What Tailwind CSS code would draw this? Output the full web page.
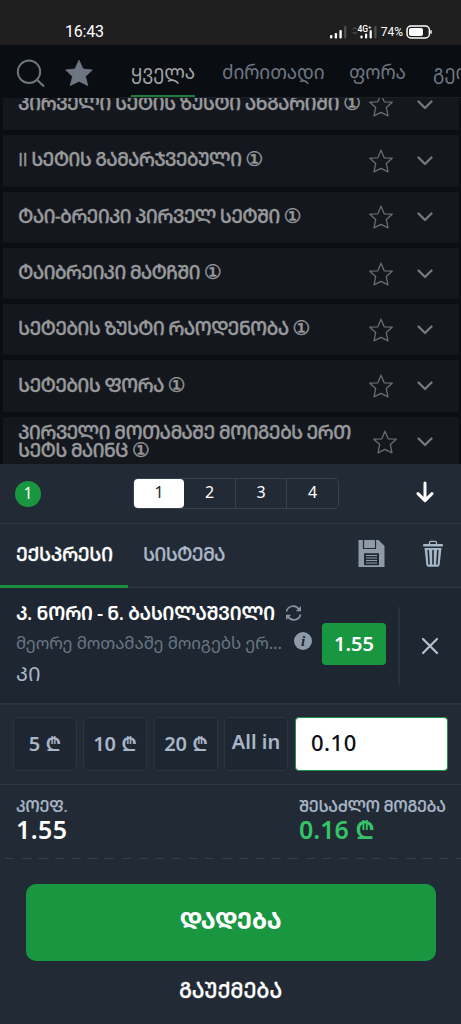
<!DOCTYPE html>
<html lang="ka">
<head>
<meta charset="utf-8">
<meta name="viewport" content="width=device-width, initial-scale=1">
<title>ფსონი</title>
<script src="https://cdn.jsdelivr.net/npm/@tailwindcss/browser@4"></script>
</head>
<body class="h-[1024px] w-[461px] overflow-hidden bg-[#222b35] font-['Noto_Sans','Noto_Sans_Georgian','DejaVu_Sans',sans-serif] text-white">
<svg class="hidden">
  <symbol id="star" viewBox="0 0 24 24"><path d="M12 1.2 L15.2 8.8 L23.2 9.2 L17.3 14.6 L19 22.8 L12 19.4 L5 22.8 L6.700 14.6 L.8 9.2 L8.8 8.8 Z" fill="none" stroke="currentColor" stroke-width="1.300" stroke-linejoin="round"/></symbol>
  <symbol id="chev" viewBox="0 0 16 10"><path d="M1.500 1.500 L8 8 L14.500 1.500" fill="none" stroke="currentColor" stroke-width="2.200" stroke-linecap="round" stroke-linejoin="round"/></symbol>
</svg>

<!-- Status bar -->
<div class="flex h-[45px] items-end justify-between bg-[#1f1f1f] pr-[29px] pb-[4px] pl-[65px] font-['Roboto',sans-serif]">
  <span class="text-[16px] leading-[19px] tracking-[-0.2px]">16:43</span>
  <div class="mb-[1px] flex items-center">
    <svg class="mr-[1px] h-[16px] w-[50px]" viewBox="1 0 50 16" fill="#fff">
      <rect x="1" y="11" width="2.4" height="3.5" rx="1"/><rect x="5.7" y="9" width="2.4" height="5.5" rx="1"/><rect x="10.4" y="6" width="2.4" height="8.5" rx="1"/><rect x="15.1" y="2" width="2.2" height="12.5" rx="1" fill="#505050"/>
      <path d="M24 5.5 l1.8 -2 l1.8 2 M24 8 l1.8 2 l1.8 -2" fill="none" stroke="#666" stroke-width="1"/>
      <text x="28.5" y="7.8" font-size="8.5" font-weight="500" font-family="Roboto">4G⁺</text>
      <rect x="31.4" y="11.5" width="2.2" height="3" rx="1"/><rect x="36" y="9.5" width="2.2" height="5" rx="1"/><rect x="40.6" y="6" width="2.2" height="8.5" rx="1"/><rect x="45.3" y="2" width="2.2" height="12.5" rx="1" fill="#505050"/>
    </svg>
    <span class="mr-[3px] text-[12px] leading-[16px]">74%</span>
    <svg class="h-[14px] w-[26px]" viewBox="0 0 26 14"><rect x="1" y="1" width="22.4" height="12" rx="4" fill="none" stroke="#fff" stroke-width="1.5"/><rect x="3" y="3" width="14" height="8" rx="2" fill="#fff"/><rect x="24.3" y="5" width="1.4" height="4" rx=".7" fill="#fff"/></svg>
  </div>
</div>

<!-- Market filter tabs -->
<div class="flex h-[53px] bg-[#0a0d12] text-[#6e7681]">
  <svg class="mt-[14px] ml-[16px] h-[28px] w-[29px] shrink-0" viewBox="0 0 29 28"><circle cx="13" cy="12.8" r="11.2" fill="none" stroke="currentColor" stroke-width="2"/><path d="M21 20.8 L27.3 26.8" stroke="currentColor" stroke-width="2.2" stroke-linecap="round"/></svg>
  <svg class="mt-[14px] ml-[20px] h-[28px] w-[28px] shrink-0" viewBox="0 0 28 28"><path d="M14 1.2 L18 10 L27.3 11 L20.4 17.4 L22.8 26.6 L14 22.2 L5.2 26.6 L7.6 17.4 L0.7 11 L10 10 Z" fill="currentColor" stroke="currentColor" stroke-width=".8" stroke-linejoin="round"/></svg>
  <div class="ml-[26px] flex flex-1 overflow-hidden border-b border-[#1b2026] pl-[12px] text-[19px] leading-[54px] tracking-[-0.1px] whitespace-nowrap">
    <span class="relative h-[52px] w-[64px] shrink-0 text-[#a0a3a6]">ყველა<i class="absolute bottom-0 left-0 h-[2px] w-[64px] bg-[#1d7b3b]"></i></span>
    <span class="ml-[27px] w-[101px] shrink-0">ძირითადი</span>
    <span class="ml-[26px] w-[57px] shrink-0">ფორა</span>
    <span class="ml-[27px] shrink-0">გეიმი</span>
  </div>
</div>

<!-- Market list -->
<div class="h-[366px] overflow-hidden bg-[#0b0e12] pr-[2px] pl-[3px] text-[19px] leading-[18px] font-medium tracking-[-0.8px] text-[#98999b] [-webkit-text-stroke:0.3px_#98999b] [font-feature-settings:'case'] font-['Open_Sans','Noto_Sans_Georgian','DejaVu_Sans',sans-serif]">
  <div class="-mt-[19px] flex flex-col gap-[5px]">
    <div class="flex h-[51.3px] items-center bg-[#14181e] pr-[26px] pl-[15px]"><span class="mt-[-3px] flex-1 tracking-[-0.68px] whitespace-nowrap">პირველი სეტის ზუსტი ანგარიში <span class="text-[20px] [-webkit-text-stroke:0.5px_#98999b] font-['DejaVu_Sans']">①</span></span><svg class="h-[24px] w-[24px] text-[#686d74]"><use href="#star"/></svg><svg class="ml-[24px] h-[10px] w-[16px] text-[#767b82]"><use href="#chev"/></svg></div>
    <div class="flex h-[51.3px] items-center bg-[#14181e] pr-[26px] pl-[15px]"><span class="mt-[-3px] flex-1 whitespace-nowrap">II სეტის გამარჯვებული <span class="text-[20px] [-webkit-text-stroke:0.5px_#98999b] font-['DejaVu_Sans']">①</span></span><svg class="h-[24px] w-[24px] text-[#686d74]"><use href="#star"/></svg><svg class="ml-[24px] h-[10px] w-[16px] text-[#767b82]"><use href="#chev"/></svg></div>
    <div class="flex h-[51.3px] items-center bg-[#14181e] pr-[26px] pl-[15px]"><span class="mt-[-3px] flex-1 whitespace-nowrap">ტაი-ბრეიკი პირველ სეტში <span class="text-[20px] [-webkit-text-stroke:0.5px_#98999b] font-['DejaVu_Sans']">①</span></span><svg class="h-[24px] w-[24px] text-[#686d74]"><use href="#star"/></svg><svg class="ml-[24px] h-[10px] w-[16px] text-[#767b82]"><use href="#chev"/></svg></div>
    <div class="flex h-[51.3px] items-center bg-[#14181e] pr-[26px] pl-[15px]"><span class="mt-[-3px] flex-1 whitespace-nowrap">ტაიბრეიკი მატჩში <span class="text-[20px] [-webkit-text-stroke:0.5px_#98999b] font-['DejaVu_Sans']">①</span></span><svg class="h-[24px] w-[24px] text-[#686d74]"><use href="#star"/></svg><svg class="ml-[24px] h-[10px] w-[16px] text-[#767b82]"><use href="#chev"/></svg></div>
    <div class="flex h-[51.3px] items-center bg-[#14181e] pr-[26px] pl-[15px]"><span class="mt-[-3px] flex-1 whitespace-nowrap">სეტების ზუსტი რაოდენობა <span class="text-[20px] [-webkit-text-stroke:0.5px_#98999b] font-['DejaVu_Sans']">①</span></span><svg class="h-[24px] w-[24px] text-[#686d74]"><use href="#star"/></svg><svg class="ml-[24px] h-[10px] w-[16px] text-[#767b82]"><use href="#chev"/></svg></div>
    <div class="flex h-[51.3px] items-center bg-[#14181e] pr-[26px] pl-[15px]"><span class="mt-[-3px] flex-1 whitespace-nowrap">სეტების ფორა <span class="text-[20px] [-webkit-text-stroke:0.5px_#98999b] font-['DejaVu_Sans']">①</span></span><svg class="h-[24px] w-[24px] text-[#686d74]"><use href="#star"/></svg><svg class="ml-[24px] h-[10px] w-[16px] text-[#767b82]"><use href="#chev"/></svg></div>
    <div class="flex h-[51.3px] items-center bg-[#14181e] pr-[26px] pl-[15px]"><span class="mt-[-3px] flex-1 whitespace-nowrap">პირველი მოთამაშე მოიგებს ერთ<br>სეტს მაინც <span class="text-[20px] leading-[16px] [-webkit-text-stroke:0.5px_#98999b] font-['DejaVu_Sans']">①</span></span><svg class="h-[24px] w-[24px] text-[#686d74]"><use href="#star"/></svg><svg class="ml-[20px] h-[10px] w-[16px] text-[#767b82]"><use href="#chev"/></svg></div>
  </div>
</div>

<!-- Bet slip header -->
<div class="flex h-[60px] items-center border-b border-[#303943] pr-[27px] pl-[15px]">
  <span class="flex h-[26px] w-[26px] items-center justify-center rounded-full bg-[#199640] pb-[2px] text-[16px] leading-none">1</span>
  <div class="ml-[92px] flex h-[31px] w-[206px] rounded-[5px] border border-[#37414b] text-[16px] leading-[27px]">
    <span class="w-[50px] rounded-[4px] bg-white text-center text-[#222b35]">1</span>
    <span class="w-[52px] border-r border-[#37414b] text-center">2</span>
    <span class="w-[51px] border-r border-[#37414b] text-center">3</span>
    <span class="w-[51px] text-center">4</span>
  </div>
  <svg class="mt-[-4px] ml-auto h-[22px] w-[18px]" viewBox="0 0 18 22"><path d="M9 2 V19 M2 12.6 L9 19.6 L16 12.6" fill="none" stroke="#fff" stroke-width="3" stroke-linecap="round" stroke-linejoin="round"/></svg>
</div>

<!-- Bet type tabs -->
<div class="flex h-[64px] items-center border-b border-[#303943] pr-[18px] text-[19px] leading-[60px] font-medium [font-feature-settings:'case'] font-['Open_Sans','Noto_Sans_Georgian',sans-serif]">
  <span class="relative h-[64px] w-[128px] pl-[16px] tracking-[-0.4px] whitespace-nowrap [-webkit-text-stroke:0.3px_#fff]">ექსპრესი<i class="absolute bottom-0 left-0 h-[3px] w-[128px] bg-[#1a8f40]"></i></span>
  <span class="h-[64px] pl-[15px] tracking-[-0.7px] text-[#a9b6c8] [-webkit-text-stroke:0.2px_#a9b6c8]">სისტემა</span>
  <svg class="mt-[-4px] ml-auto h-[27px] w-[27px]" viewBox="0 0 27 27"><path d="M.5 0 H20.5 L26.5 6 V27 H.5 Z" fill="#8e9aa8"/><path d="M5.5 0 V8.5 H17.5 V0" fill="none" stroke="#222b35" stroke-width="1.2"/><rect x="12.8" y="1.2" width="4" height="5.2" fill="#8e9aa8"/><rect x="6" y="13.2" width="15" height="12" fill="#222b35"/><path d="M8 15.5 H19 M8 18 H19 M8 20.5 H19 M8 23 H19" stroke="#8e9aa8" stroke-width="1.2"/></svg>
  <svg class="mt-[-4px] ml-[38px] h-[27px] w-[20px]" viewBox="0 0 20 27"><path d="M6.5 4.5 V2.6 Q6.5 1.3 7.8 1.3 H12.2 Q13.5 1.3 13.5 2.6 V4.5" fill="none" stroke="#a9b6c8" stroke-width="1.3"/><rect x="0" y="4" width="20" height="2.6" rx="1" fill="#a9b6c8"/><path d="M1.5 8 H18.5 L16.6 25 Q16.4 26.8 14.6 26.8 H5.4 Q3.6 26.8 3.4 25 Z" fill="#a9b6c8"/><path d="M5.2 10.5 L6.1 24 M10 10.5 V24 M14.8 10.5 L13.9 24" stroke="#222b35" stroke-width="1.6" stroke-linecap="round"/></svg>
</div>

<!-- Selection -->
<div class="flex h-[117px] border-b-2 border-[#2b343e] bg-[#1e2731] pl-[16px]">
  <div class="w-[306px] pt-[12px]">
    <div class="flex h-[26px] items-center">
      <span class="w-[269px] text-[19px] font-semibold tracking-[-0.5px] whitespace-nowrap [font-feature-settings:'case'] font-['Open_Sans','Noto_Sans_Georgian',sans-serif]">კ. ნორი - ნ. ბასილაშვილი</span>
      <svg class="h-[16px] w-[17px] text-[#8794a3]" viewBox="0 0 17 16" fill="none" stroke="currentColor" stroke-width="1.7"><path d="M1.5 6.5 A6.8 6.8 0 0 1 14 4.5 M15.5 9.5 A6.8 6.8 0 0 1 3 11.500"/><path d="M10.8 6.2 H16 V1 Z M6.2 9.8 H1 V15 Z" fill="currentColor" stroke="none"/></svg>
    </div>
    <div class="flex h-[33px] items-center">
      <span class="w-[278px] text-[17px] tracking-[-0.14px] whitespace-nowrap text-[#6b7683]">მეორე მოთამაშე მოიგებს ერ...</span>
      <svg class="-mt-[4px] h-[18px] w-[18px]" viewBox="0 0 18 18"><circle cx="9" cy="9" r="9" fill="#8e9aa8"/><text x="9" y="14" text-anchor="middle" font-size="15" font-weight="700" font-style="italic" font-family="Liberation Serif" fill="#1e2731">i</text></svg>
    </div>
    <div class="text-[20px] leading-[30px] text-[#a9b6c8] [font-feature-settings:'case'] font-['Open_Sans','Noto_Sans_Georgian',sans-serif]">კი</div>
  </div>
  <div class="mt-[35px] flex h-[42px] w-[64px] items-center justify-center rounded-[4px] bg-[#199640] text-[20px] font-semibold">1.55</div>
  <i class="mt-[19px] ml-[12px] h-[78px] w-[2px] bg-[#28323c]"></i>
  <svg class="mt-[49px] ml-[21px] h-[18px] w-[18px]" viewBox="0 0 18 18"><path d="M2 2 L16 16 M16 2 L2 16" stroke="#b4c0d0" stroke-width="2.2" stroke-linecap="round"/></svg>
</div>

<!-- Stake -->
<div class="flex h-[80px] items-start border-b border-[#303943] pt-[12px] pl-[13px] text-[20px] leading-[52px] font-semibold text-[#a9b6c8]">
  <button class="mr-[6px] h-[54px] w-[64px] rounded-[4px] border border-[#2b353f] bg-[#1e2731]">5 ₾</button>
  <button class="mr-[7px] h-[54px] w-[64px] rounded-[4px] border border-[#2b353f] bg-[#1e2731]">10 ₾</button>
  <button class="mr-[6px] h-[54px] w-[64px] rounded-[4px] border border-[#2b353f] bg-[#1e2731]">20 ₾</button>
  <button class="mr-[7px] h-[54px] w-[64px] rounded-[4px] border border-[#2b353f] bg-[#1e2731] pb-[4px] leading-[48px] whitespace-nowrap">All in</button>
  <div class="h-[54px] w-[153px] rounded-[4px] border border-[#199640] bg-white pl-[15px] text-[22px] leading-[49px] font-medium tracking-[0.5px] text-[#0c1016]">0.10</div>
</div>

<!-- Totals -->
<div class="flex h-[73px] justify-between pt-[11px] pr-[14px] pl-[16px]">
  <div>
    <div class="text-[16px] leading-[20px] font-medium tracking-[-0.3px] text-[#a9b6c8] [-webkit-text-stroke:0.2px_#a9b6c8] [font-feature-settings:'case'] font-['Open_Sans','Noto_Sans_Georgian',sans-serif]">კოეფ.</div>
    <div class="text-[25px] leading-[27px] font-semibold tracking-[0.4px]">1.55</div>
  </div>
  <div class="w-[148px]">
    <div class="text-[16px] leading-[20px] font-medium tracking-[-0.4px] whitespace-nowrap text-[#a9b6c8] [-webkit-text-stroke:0.2px_#a9b6c8] [font-feature-settings:'case'] font-['Open_Sans','Noto_Sans_Georgian',sans-serif]">შესაძლო მოგება</div>
    <div class="text-[25px] leading-[27px] font-semibold text-[#35c468]">0.16 ₾</div>
  </div>
</div>
<div class="ml-[5px] h-[1px] bg-[repeating-linear-gradient(90deg,#36404a_0_9px,transparent_9px_16.7px)]"></div>

<!-- Actions -->
<div class="flex flex-col items-center pt-[25px] [font-feature-settings:'case'] font-['Open_Sans','Noto_Sans_Georgian',sans-serif]">
  <button class="h-[77px] w-[410px] rounded-[10px] bg-[#199640] pb-[6px] text-[24px] font-bold tracking-[-0.3px]">დადება</button>
  <button class="mt-[11px] text-[21px] leading-[36px] font-medium tracking-[-0.2px] [-webkit-text-stroke:0.3px_#fff]">გაუქმება</button>
</div>
</body>
</html>
